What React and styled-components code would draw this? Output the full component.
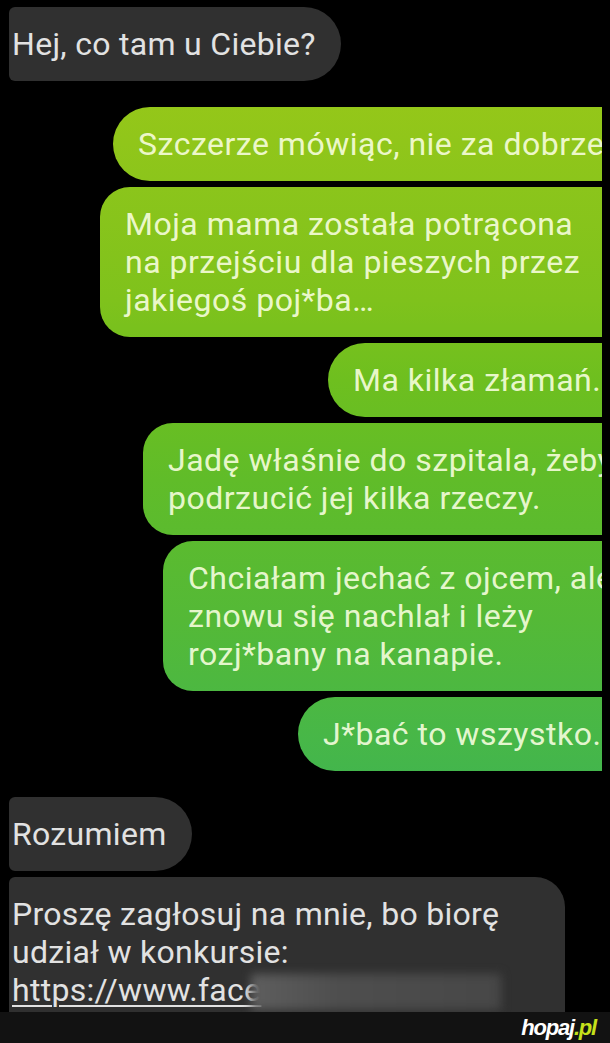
import React from 'react';
import styled, { createGlobalStyle } from 'styled-components';

const GlobalStyle = createGlobalStyle`
  html, body {
    margin: 0;
    padding: 0;
    background: #000;
  }
  body {
    font-family: Roboto, "Noto Sans", sans-serif;
  }
`;

const Screen = styled.div`
  width: 610px;
  height: 1043px;
  display: flex;
  flex-direction: column;
  background: #000;
  overflow: hidden;
`;

const Thread = styled.div`
  flex: 1;
  width: 602px;
  overflow: hidden;
  padding-top: 7px;
  display: flex;
  flex-direction: column;
  gap: 26px;
`;

const Group = styled.div`
  display: flex;
  flex-direction: column;
  gap: 6px;
`;

const Incoming = styled.div`
  align-self: flex-start;
  margin-left: 9px;
  width: ${p => (p.$width ? `${p.$width}px` : 'auto')};
  box-sizing: border-box;
  padding: 18px 25px 18px 3px;
  background: #303030;
  color: #e2e2e2;
  font-size: 32px;
  letter-spacing: 0.3px;
  line-height: 38px;
  border-radius: ${p => (p.$tall ? '6px 30px 0 0' : '6px 37px 37px 6px')};
  white-space: nowrap;
`;

const Outgoing = styled.div`
  align-self: stretch;
  margin-left: ${p => p.$left}px;
  margin-right: -60px;
  padding: 18px 0 18px 25px;
  border-radius: ${p => (p.$lines > 1 ? 30 : 37)}px;
  background: linear-gradient(
    180deg,
    #95c719 100px,
    #8cc51b 180px,
    #7fc21c 300px,
    #6ebf1f 380px,
    #60bc29 480px,
    #54b937 620px,
    #47b748 740px,
    #42b54d 780px
  );
  background-attachment: fixed;
  color: rgba(250, 255, 225, 0.9);
  font-size: 32px;
  letter-spacing: 0.5px;
  line-height: 38px;
  white-space: nowrap;
`;

const Line = styled.span`
  display: block;
`;

const Link = styled.span`
  text-decoration: underline;
  text-decoration-thickness: 2px;
  text-underline-offset: 4px;
`;

const Blur = styled.span`
  display: inline-block;
  width: 250px;
  height: 36px;
  margin-left: -10px;
  vertical-align: -9px;
  background: linear-gradient(90deg, #5e5e5e, #4e4e4e 35%, #474747 100%);
  filter: blur(5px);
`;

const Footer = styled.div`
  height: 31px;
  flex: none;
  background: #121212;
  display: flex;
  align-items: center;
  justify-content: flex-end;
  padding-right: 14px;
`;

const Brand = styled.span`
  font-family: "Liberation Sans", Arial, sans-serif;
  font-weight: 700;
  font-style: italic;
  font-size: 22px;
  letter-spacing: -1.2px;
  color: #fff;
`;

const BrandTld = styled.span`
  color: #c6e11b;
`;

const outgoing = [
  { left: 113, lines: ['Szczerze mówiąc, nie za dobrze'] },
  {
    left: 100,
    lines: [
      'Moja mama została potrącona',
      'na przejściu dla pieszych przez',
      'jakiegoś poj*ba…',
    ],
  },
  { left: 328, lines: ['Ma kilka złamań.'] },
  {
    left: 143,
    lines: ['Jadę właśnie do szpitala, żeby', 'podrzucić jej kilka rzeczy.'],
  },
  {
    left: 163,
    lines: [
      'Chciałam jechać z ojcem, ale',
      'znowu się nachlał i leży',
      'rozj*bany na kanapie.',
    ],
  },
  { left: 298, lines: ['J*bać to wszystko.'] },
];

const App = () => (
  <Screen>
    <GlobalStyle />
    <Thread>
      <Group>
        <Incoming>Hej, co tam u Ciebie?</Incoming>
      </Group>
      <Group>
        {outgoing.map((m, i) => (
          <Outgoing key={i} $left={m.left} $lines={m.lines.length}>
            {m.lines.map(l => (
              <Line key={l}>{l}</Line>
            ))}
          </Outgoing>
        ))}
      </Group>
      <Group>
        <Incoming>Rozumiem</Incoming>
        <Incoming $width={556} $tall>
          <Line>Proszę zagłosuj na mnie, bo biorę</Line>
          <Line>udział w konkursie:</Line>
          <Line>
            <Link>https://www.face</Link>
            <Blur />
          </Line>
        </Incoming>
      </Group>
    </Thread>
    <Footer>
      <Brand>
        hopaj<BrandTld>.pl</BrandTld>
      </Brand>
    </Footer>
  </Screen>
);

export default App;
